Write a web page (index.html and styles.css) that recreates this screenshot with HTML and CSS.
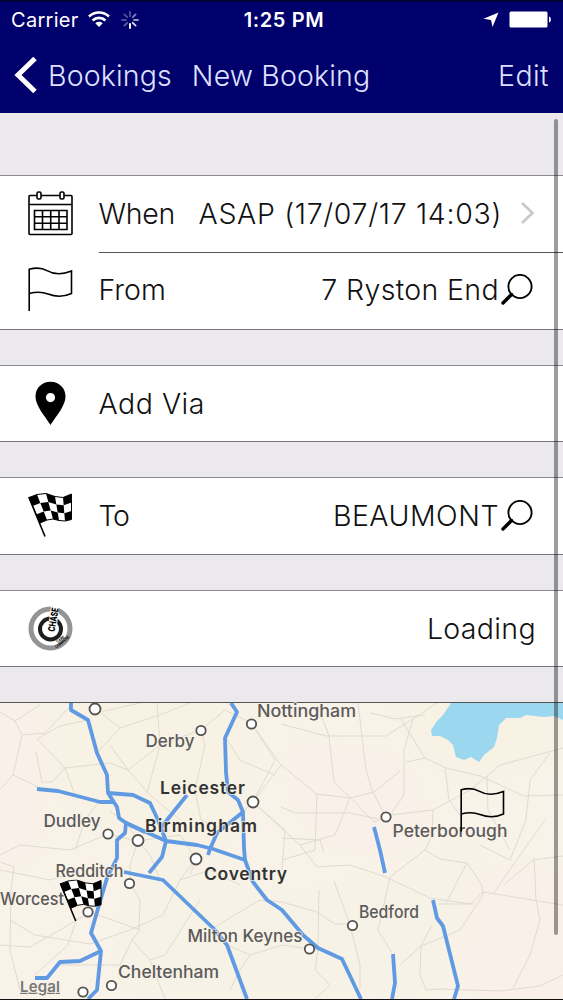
FILE: index.html
```html
<!DOCTYPE html>
<html lang="en">
<head>
    <meta charset="UTF-8">
    <meta name="viewport" content="width=device-width, initial-scale=1.0">
    <title>New Booking</title>
    <link rel="stylesheet" href="styles.css">
</head>
<body>
    <!-- shared icons -->
    <svg class="defs" width="0" height="0">
        <symbol id="flag" viewBox="0 0 45 45">
            <path d="M1.2 44V2.3C7 .6 14 .8 19 3.6c7 4 15 4.2 24.500 .4v22.500c-8 3.600-17 3-23.500 .5-6-2.300-12-2.200-18.800-.4" fill="none" stroke="#000" stroke-width="1.600"/>
        </symbol>
        <symbol id="checkered" viewBox="0 0 45 45">
            <path d="M1 4.500 9 1.500 18 .5 27 3.500 35 4.500 43.500 1V26.500L37 28 31 27.500 25 26 19 27 12 30Z" fill="#fff" stroke="#000" stroke-linejoin="round"/>
            <path d="M1 4.500 9 1.500 12.300 10 4.700 13ZM18 .5 27 3.500 28.300 11.500 20.300 9ZM35 4.500 43.500 1V9.500L35.700 12.300Z"/>
            <path d="M12.300 10 20.300 9 22.700 17.500 15.700 18.500ZM28.300 11.500 35.700 12.300 36.300 20.200 29.700 19.500Z"/>
            <path d="M8.300 21.500 15.700 18.500 19 27 12 30ZM22.700 17.500 29.700 19.500 31 27.500 25 26ZM36.300 20.200 43.500 18V26.500L37 28Z"/>
            <path d="M.8 4 17 43.500" stroke="#000" stroke-width="1.600"/>
        </symbol>
        <symbol id="search" viewBox="0 0 32 32">
            <circle cx="19" cy="12.500" r="11.600" fill="none" stroke="#000" stroke-width="1.900"/>
            <path d="M10.500 20.500 2 29" stroke="#000" stroke-width="3.400" stroke-linecap="round"/>
        </symbol>
    </svg>

    <header class="header">
        <div class="status">
            <div class="status-left">
                <span class="carrier">Carrier</span>
                <svg width="22" height="17" viewBox="0 0 22 17" fill="none" stroke="#fff" stroke-width="2.600">
                    <path d="M1 5.500a14.500 14.500 0 0 1 20 0M4.600 9.500a9 9 0 0 1 12.800 0"/>
                    <path d="M11 16 7.300 12.300a5.500 5.500 0 0 1 7.400 0Z" fill="#fff" stroke="none"/>
                </svg>
                <svg class="spinner" width="18" height="18" viewBox="-9 -9 18 18" stroke="#fff" stroke-width="1.900" stroke-linecap="round">
                    <path d="M0-4V-8" opacity=".3"/>
                    <path d="M2.800-2.800 5.600-5.600" opacity=".5"/>
                    <path d="M4 0H8" opacity=".6"/>
                    <path d="M2.800 2.800 5.600 5.600" opacity=".85"/>
                    <path d="M0 4V8"/>
                    <path d="M-2.800 2.800-5.600 5.600" opacity=".35"/>
                    <path d="M-4 0H-8" opacity=".3"/>
                    <path d="M-2.800-2.800-5.600-5.600" opacity=".3"/>
                </svg>
            </div>
            <span class="clock">1:25 PM</span>
            <div class="status-right">
                <svg width="16" height="16" viewBox="0 0 16 16"><path d="M15.500 .5 9.500 15 8 8 .5 6.800Z" fill="#fff"/></svg>
                <svg width="43" height="17" viewBox="0 0 43 17">
                    <rect x=".5" y=".5" width="38" height="16" rx="1.500" fill="#fff"/>
                    <path d="M40 5.500c2.500 .5 2.500 5.500 0 6Z" fill="#fff"/>
                </svg>
            </div>
        </div>
        <nav class="nav">
            <svg width="24" height="38" viewBox="0 0 24 38"><path d="M21 2.500 4 19 21 35.500" fill="none" stroke="#fff" stroke-width="5"/></svg>
            <span class="nav-back">Bookings</span>
            <span class="nav-title">New Booking</span>
            <span class="nav-edit">Edit</span>
        </nav>
    </header>

    <main class="content">
        <section class="group journey">
            <div class="row">
                <div class="icon">
                    <svg width="45" height="45" viewBox="0 0 45 45" fill="none" stroke="#000" stroke-width="1.600">
                        <rect x="1" y="4.500" width="43" height="39" rx="1"/>
                        <path d="M1 13.500H44"/>
                        <rect x="9" y="1" width="4" height="7" rx="1.500" fill="#fff"/>
                        <rect x="32" y="1" width="4" height="7" rx="1.500" fill="#fff"/>
                        <path d="M6.500 19.500H39V38.500H6.500ZM6.500 25.800H39M6.500 32.200H39M14.500 19.500V38.500M22.700 19.500V38.500M31 19.500V38.500"/>
                    </svg>
                </div>
                <span class="label when">When</span>
                <span class="value date">ASAP (17/07/17 14:03)</span>
                <svg class="chevron" width="15" height="24" viewBox="0 0 15 24"><path d="M2 2 12.500 12 2 22" fill="none" stroke="#c7c7cc" stroke-width="2.600"/></svg>
            </div>
            <div class="row inset">
                <div class="icon"><svg width="45" height="45"><use href="#flag"/></svg></div>
                <span class="label">From</span>
                <span class="value address">7 Ryston End</span>
                <svg class="search" width="32" height="32"><use href="#search"/></svg>
            </div>
        </section>

        <section class="group">
            <div class="row">
                <div class="icon">
                    <svg width="45" height="45" viewBox="0 0 45 45"><path fill-rule="evenodd" d="M22.500 .8C14 .8 7.500 7 7.500 15.500c0 9 8.500 18.500 15 28.500 6.500-10 15-19.500 15-28.500C37.500 7 31 .8 22.500 .8Zm0 11.200a4.600 4.600 0 1 1 0 9.200 4.600 4.600 0 0 1 0-9.200Z"/></svg>
                </div>
                <span class="label via">Add Via</span>
            </div>
        </section>

        <section class="group">
            <div class="row">
                <div class="icon"><svg width="45" height="45"><use href="#checkered"/></svg></div>
                <span class="label to">To</span>
                <span class="value place">BEAUMONT</span>
                <svg class="search" width="32" height="32"><use href="#search"/></svg>
            </div>
        </section>

        <section class="group">
            <div class="row">
                <div class="icon">
                    <svg class="logo" width="45" height="45" viewBox="0 0 45 45">
                        <circle cx="22.500" cy="22.500" r="19.500" fill="none" stroke="#949494" stroke-width="5"/>
                        <circle cx="22.500" cy="23" r="10.500" fill="none" stroke="#1c1c1c" stroke-width="4"/>
                        <path d="M19.500 25 23 0H31L28.500 25Z" fill="#fff"/>
                        <text class="logo-name" transform="translate(26.500 26) rotate(-80)" textLength="24" lengthAdjust="spacingAndGlyphs">CHASE</text>
                        <text class="logo-small" transform="translate(29.500 37) rotate(-35)" textLength="9" lengthAdjust="spacingAndGlyphs">CARS</text>
                        <text class="logo-small" transform="translate(28.500 42.500) rotate(-40)" textLength="17" lengthAdjust="spacingAndGlyphs">CAMBRIDGE</text>
                    </svg>
                </div>
                <span class="value loading">Loading</span>
            </div>
        </section>

        <div class="map">
            <!-- drawn in page coordinates -->
            <svg width="563" height="296" viewBox="0 703 563 296">
                <defs>
                    <filter id="soft"><feGaussianBlur stdDeviation="18"/></filter>
                    <clipPath id="frame"><rect y="703" width="563" height="296"/></clipPath>
                </defs>
                <g clip-path="url(#frame)">
                    <rect y="703" width="563" height="296" fill="#f8f2e8"/>
                    <g filter="url(#soft)">
                        <path d="M60 690H260L240 800 200 890 120 830 50 790Z" fill="#f7f2e3"/>
                        <path d="M380 690H563V750L460 780 420 740Z" fill="#f7f2e3"/>
                        <path d="M130 880 300 900 480 840 500 900 420 1000H120Z" fill="#f7f2e6"/>
                        <path d="M-20 700H30V850L-20 870ZM290 750 400 770 420 850 320 830ZM470 880H580V1010H480Z" fill="#faf0ea"/>
                    </g>
                    <path fill="#9bd8f0" d="M451 703 447 709 443 715 437 721 431 730 432 736 440 736 448 740 453 745 456 757 464 760 471 757 479 762 484 755 494 747 497 738 499 725 506 718 520 718 526 715 544 717 554 716 563 720V703Z"/>
                    <g class="minor">
                        <path d="M0 712 15 721 40 705M15 721 22 735 13 775 40 788M0 790 13 775M22 735 45 733 70 706M36 752 42 782 52 782M88 720 60 726 37 739 65 768 75 795M65 768 52 782M65 768 110 763 128 770 160 745 195 732M97 753 120 728 160 715 190 703M120 728 100 712 140 703M110 745 128 770 150 795 180 820M201 730 205 745 195 790 201 820M201 730 225 710 251 723M157 703 160 745 147 793M251 723 275 760 253 802M226 738 240 760 275 775"/>
                        <path d="M251 723 281 765 317 794 350 798 374 792 400 771M281 724 326 736 386 736 413 719 437 703M317 705 329 736 334 782 351 798 374 822 386 817 372 790 366 770 358 703M400 718 425 758 446 768 480 776 524 796 563 795M487 776 500 765 563 748M550 753 530 780 526 820 510 860 480 845M404 773 404 795 390 815 433 810 470 790 487 776 488 810 510 850M413 719 404 750 404 773M371 713 395 719 425 715M406 762 425 758M445 768 449 800 460 815M253 802 281 765M281 807 295 813 350 813 378 819M350 798 335 835 300 845M317 794 315 850 282 860M282 838 320 840 324 852"/>
                        <path d="M253 802 300 845 317 867 350 865 386 877 430 898 470 904 483 892 563 905M433 810 432 835 425 850 390 877 386 895 378 930 392 953M334 881 350 925 360 965 360 988M319 890 318 946M282 902 317 912 335 924 352 924M425 850 440 859 467 863 482 885 483 895 460 930 421 946 400 965M467 863 445 905M494 893 520 855 545 820M504 885 533 860 563 856M534 858 536 900 540 920 530 955 513 988M421 946 420 975 426 990 440 989 500 991 540 986 563 975M438 904H474M421 946 432 925"/>
                        <path d="M0 862 14 867 11 890 10 950 20 990M0 870 50 880 80 872M10 920 35 935 90 944 130 930 163 915 180 880 196 859M90 912 140 930 132 940 150 960 165 955 200 900M138 841 125 820 110 812M138 841 150 855 160 880M138 841 130 865 130 883 140 900 139 930M138 841 108 834 70 850 20 845 0 855M138 841 180 835 196 859 190 875M132 940 120 965 60 965M77 918 68 945 35 975M227 945 250 955 240 970 230 990M213 928 260 900 282 902M150 960 165 999M250 955 282 945 318 950M318 950 315 970 330 985 315 999M0 945 30 947 60 930 85 915M180 880 210 870 240 885M253 802 285 830 282 870M100 800 85 820 75 850M201 820 225 830 253 802"/>
                    </g>
                    <g class="motorway">
                        <path d="M71 703V710L88 720 97 753 107 775 108 793 117 807 119 818 126 823 166 841 197 845 213 849 245 860 253 882 267 900 282 910 303 935 318 948 342 959 361 999"/>
                        <path d="M37 789 58 791 100 802H113M108 793 133 795 150 803 158 820 166 841 162 857 149 873M187 795 167 820 160 829"/>
                        <path d="M231 703 237 712 225 738 226 772 228 792 238 800 243 812 244 848 245 860M243 812 217 833 210 849 208 855M145 832 126 823"/>
                        <path d="M126 823 125 833 117 840V858L107 878 97 912 91 933 101 951 97 990 88 999M101 951 80 961 60 962 47 978H35"/>
                        <path d="M124 872 163 880 213 928 227 945 247 999M374 827 380 850 385 873M433 900 437 918 443 926 458 986 454 999M393 954 395 983 392 999"/>
                    </g>
                    <g class="towns">
                        <circle cx="95" cy="709" r="5.500"/>
                        <circle cx="201" cy="730.500" r="4.700"/>
                        <circle cx="251.500" cy="724" r="4.700"/>
                        <circle cx="253" cy="802" r="5.500"/>
                        <circle cx="108" cy="834" r="4.700"/>
                        <circle cx="138" cy="840.500" r="5.500"/>
                        <circle cx="196" cy="859" r="5.500"/>
                        <circle cx="129.500" cy="883.500" r="4.700"/>
                        <circle cx="88" cy="912" r="4.700"/>
                        <circle cx="111.500" cy="985.500" r="4.700"/>
                        <circle cx="83" cy="992" r="4.700"/>
                        <circle cx="386" cy="817" r="4.700"/>
                        <circle cx="352.500" cy="925.500" r="4.700"/>
                        <circle cx="309.500" cy="949" r="4.700"/>
                    </g>
                </g>
                <g class="places">
                    <text x="257" y="716.500" textLength="99" lengthAdjust="spacingAndGlyphs">Nottingham</text>
                    <text x="145.500" y="747" textLength="49" lengthAdjust="spacingAndGlyphs">Derby</text>
                    <text x="43.500" y="827" textLength="57" lengthAdjust="spacingAndGlyphs">Dudley</text>
                    <text x="392.500" y="837" textLength="115" lengthAdjust="spacingAndGlyphs">Peterborough</text>
                    <text x="55.500" y="877" textLength="68" lengthAdjust="spacingAndGlyphs">Redditch</text>
                    <text x="0" y="905" textLength="64" lengthAdjust="spacingAndGlyphs">Worcest</text>
                    <text x="187.500" y="942" textLength="115" lengthAdjust="spacingAndGlyphs">Milton Keynes</text>
                    <text x="359" y="918" textLength="60" lengthAdjust="spacingAndGlyphs">Bedford</text>
                    <text x="118" y="978" textLength="101" lengthAdjust="spacingAndGlyphs">Cheltenham</text>
                    <text class="city" x="160" y="794" textLength="85">Leicester</text>
                    <text class="city" x="145" y="832" textLength="112">Birmingham</text>
                    <text class="city" x="204" y="880" textLength="83">Coventry</text>
                    <text class="legal" x="20" y="991.500" textLength="40">Legal</text>
                </g>
                <use href="#flag" x="460" y="787.500" width="45" height="45"/>
                <use href="#checkered" x="59.500" y="879.500" width="43" height="43"/>
            </svg>
        </div>
        <div class="scrollbar"></div>
    </main>
</body>
</html>
```
FILE: styles.css
```css
* {
    box-sizing: border-box;
}
body {
    margin: 0;
    width: 563px;
    height: 1000px;
    overflow: hidden;
    background: #111;
    font-family: Inter, "Liberation Sans", sans-serif;
    color: #111;
}
svg {
    display: block;
    flex: none;
}
.defs {
    position: absolute;
}
.header {
    height: 113px;
    background: #00006c;
    border-top: 2px solid #00003a;
    color: #fff;
}
.status {
    display: grid;
    grid-template-columns: 1fr auto 1fr;
    align-items: center;
    height: 35px;
    padding: 0 11px;
    font-size: 20px;
}
.status-left,
.status-right {
    display: flex;
    align-items: center;
}
.status-left {
    gap: 9px;
}
.carrier {
    letter-spacing: 0.3px;
}
.spinner {
    margin-left: 2px;
}
.clock {
    padding-left: 5px;
    font-weight: 600;
    letter-spacing: 0.6px;
}
.status-right {
    justify-content: flex-end;
    gap: 10px;
}
.nav {
    display: flex;
    align-items: center;
    height: 76px;
    padding: 0 14px;
    font-size: 28.5px;
    font-weight: 300;
    letter-spacing: 0.15px;
    color: #dfe0ff;
    white-space: nowrap;
}
.nav-back {
    margin-left: 10px;
}
.nav-title {
    margin-left: 20px;
}
.nav-edit {
    margin-left: auto;
    letter-spacing: 0.4px;
}

/* Booking form */
.content {
    position: relative;
    height: 886px;
    padding-top: 62px;
    background: #ebe9ec;
}
.group {
    height: 77.5px;
    margin-bottom: 35px;
    background: #fff;
    border-top: 1px solid #8c8a8e;
    border-bottom: 1px solid #77757a;
}
.journey {
    height: 154.5px;
}
.row {
    position: relative;
    display: flex;
    align-items: center;
    height: 75.5px;
    padding-right: 28px;
    font-size: 28.5px;
    font-weight: 300;
    white-space: nowrap;
}
.journey .row {
    height: 76.25px;
    padding-bottom: 1.5px;
}
.inset::before {
    content: "";
    position: absolute;
    top: -0.5px;
    left: 99px;
    right: 0;
    height: 1px;
    background: #555;
}
.icon {
    width: 99px;
    padding-left: 28px;
}
.label {
    margin-left: -0.5px;
}
.when {
    letter-spacing: -0.3px;
}
.via {
    letter-spacing: 0.5px;
}
.to {
    letter-spacing: -1.5px;
}
.value {
    margin-left: auto;
}
.date {
    letter-spacing: 0.67px;
}
.address,
.loading {
    letter-spacing: 0.35px;
}
.place {
    letter-spacing: 0.5px;
}
.loading {
    margin-right: -1px;
}
.chevron {
    margin-left: 18px;
}
.search {
    margin-left: 2px;
    margin-right: 2px;
}
.logo {
    overflow: visible;
}
.logo-name {
    font-size: 9.5px;
    font-weight: 800;
}
.logo-small {
    font-size: 4px;
    font-weight: 700;
}

/* Map */
.map {
    height: 297px;
    border-top: 1px solid #555;
}
.map svg {
    overflow: visible;
}
.minor {
    fill: none;
    stroke: #e0dbd0;
    stroke-width: 1;
}
.motorway {
    fill: none;
    stroke: #5f9ae3;
    stroke-width: 3.8;
    stroke-linejoin: round;
}
.towns {
    fill: #fff;
    stroke: #55524f;
    stroke-width: 1.8;
}
.places {
    font-size: 17px;
    font-weight: 500;
    fill: #5c5a5a;
    stroke: rgba(248, 242, 232, 0.7);
    stroke-width: 2px;
    paint-order: stroke;
}
.city {
    font-size: 17.5px;
    font-weight: 600;
    fill: #333;
}
.legal {
    font-size: 15px;
    font-weight: 600;
    fill: #777;
    text-decoration: underline;
}
.scrollbar {
    position: absolute;
    top: 6px;
    right: 5px;
    width: 4px;
    height: 816px;
    border-radius: 2px;
    background: rgba(0, 0, 0, 0.38);
}
```
